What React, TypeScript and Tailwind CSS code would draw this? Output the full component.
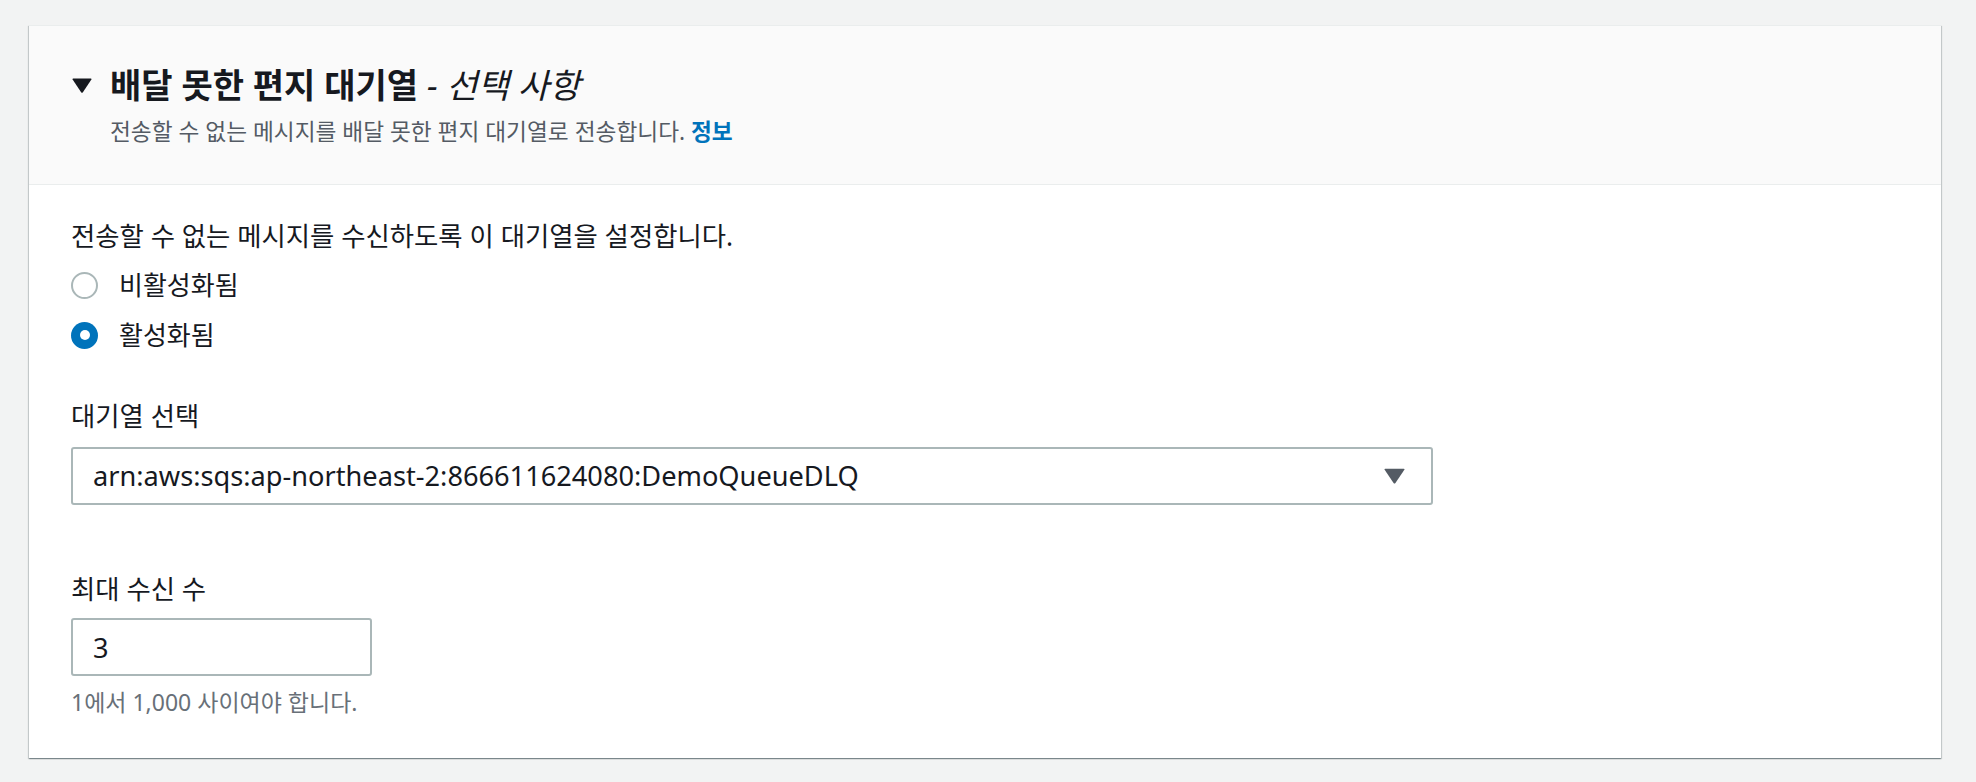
import { useState } from "react";

const Caret = ({ className, color }: { className: string; color: string }) => (
  <svg className={className} viewBox="0 0 20 15" fill={color}>
    <path d="M1.2 0.5 H18.8 Q20 0.5 19.4 1.6 L10.9 14.2 Q10 15.2 9.1 14.2 L0.6 1.6 Q0 0.5 1.2 0.5 Z" />
  </svg>
);

const Radio = ({ checked, label, onClick }: { checked: boolean; label: string; onClick: () => void }) => (
  <button type="button" onClick={onClick} className="flex h-[34px] items-center text-left">
    {checked ? (
      <span className="box-border flex h-[27px] w-[27px] items-center justify-center rounded-full bg-[#0073bb]">
        <span className="h-[10px] w-[10px] rounded-full bg-white" />
      </span>
    ) : (
      <span className="box-border h-[27px] w-[27px] rounded-full border-[2.5px] border-[#aab7b8] bg-white" />
    )}
    <span className="ml-[21px] text-[26px] leading-[32px] text-[#16191f]">{label}</span>
  </button>
);

const App = () => {
  const [enabled, setEnabled] = useState(true);
  const [maxReceive, setMaxReceive] = useState("3");

  return (
    <div
      className="min-h-[782px] bg-[#f2f3f3] pl-[29px] pr-[35px] pt-[25px] pb-[25px]"
      style={{ fontFamily: '"Noto Sans", "Noto Sans CJK KR", sans-serif' }}
    >
      <div className="w-[1912px] border-t border-[#eaeded] bg-white shadow-[0_1px_1px_0_rgba(0,28,36,0.3),1px_1px_1px_0_rgba(0,28,36,0.15),-1px_1px_1px_0_rgba(0,28,36,0.15)]">
        {/* header */}
        <div className="border-b border-[#eaeded] bg-[#fafafa] pl-[43px] pt-[39px] pb-[38px]">
          <div className="flex items-center">
            <Caret className="h-[15px] w-[20px]" color="#16191f" />
            <h2 className="ml-[18px] text-[34px] leading-[40px] text-[#16191f]">
              <span className="font-bold">배달 못한 편지 대기열</span>
              <span className="italic"> - 선택 사항</span>
            </h2>
          </div>
          <p className="mt-[13px] pl-[38px] text-[22.7px] leading-[28px] text-[#545b64]">
            전송할 수 없는 메시지를 배달 못한 편지 대기열로 전송합니다.{" "}
            <a className="font-bold text-[#0073bb]">정보</a>
          </p>
        </div>

        {/* body */}
        <div className="pl-[42px] pt-[35px] pb-[42px]">
          <p className="text-[26.4px] leading-[32px] text-[#16191f]">
            전송할 수 없는 메시지를 수신하도록 이 대기열을 설정합니다.
          </p>
          <div className="mt-4 flex flex-col gap-4">
            <Radio checked={!enabled} label="비활성화됨" onClick={() => setEnabled(false)} />
            <Radio checked={enabled} label="활성화됨" onClick={() => setEnabled(true)} />
          </div>

          <label className="mt-[48px] block text-[26.4px] leading-[32px] text-[#16191f]">대기열 선택</label>
          <div className="mt-[15px] box-border flex h-[58px] w-[1362px] items-center justify-between rounded-[3px] border-2 border-[#aab7b8] bg-white pl-[20px] pr-[26px]">
            <span className="text-[27.2px] leading-[34px] text-[#16191f]">
              arn:aws:sqs:ap-northeast-2:866611624080:DemoQueueDLQ
            </span>
            <Caret className="h-[16px] w-[21px]" color="#545b64" />
          </div>

          <label className="mt-[68px] block text-[26.4px] leading-[32px] text-[#16191f]">최대 수신 수</label>
          <input
            value={maxReceive}
            onChange={(e) => setMaxReceive(e.target.value)}
            className="mt-[13px] box-border block h-[58px] w-[301px] rounded-[3px] border-2 border-[#aab7b8] bg-white pl-[20px] text-[27.2px] text-[#16191f] outline-none"
          />
          <p className="mt-[12px] text-[23px] leading-[28px] text-[#687078]">1에서 1,000 사이여야 합니다.</p>
        </div>
      </div>
    </div>
  );
};

export default App;
